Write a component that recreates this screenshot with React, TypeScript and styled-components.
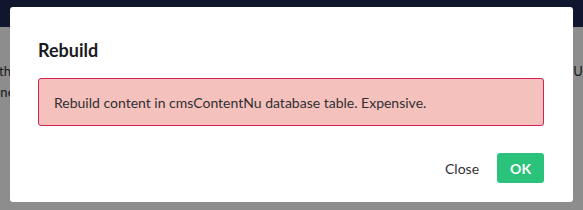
import styled, { createGlobalStyle } from 'styled-components';

const GlobalStyle = createGlobalStyle`
  html, body {
    margin: 0;
    padding: 0;
    width: 583px;
    height: 210px;
    overflow: hidden;
    font-family: Lato, "Open Sans", sans-serif;
  }
`;

const Page = styled.div`
  position: relative;
  width: 583px;
  height: 210px;
  display: flex;
  flex-direction: column;
  background: #f3f3f5;
  overflow: hidden;
`;

const TopBar = styled.div`
  height: 27px;
  background: #1b264f;
  flex-shrink: 0;
`;

const Behind = styled.div`
  flex: 1;
  display: flex;
  justify-content: space-between;
  padding-top: 34px;
  font-size: 13px;
  color: #303033;
  line-height: 21px;
`;

const BehindLine = styled.p<{ $shift: number }>`
  margin: 0 0 0 ${(p) => p.$shift}px;
  white-space: nowrap;
`;

const Overlay = styled.div`
  position: absolute;
  inset: 0;
  background: rgba(0, 0, 0, 0.42);
`;

const Modal = styled.div`
  position: absolute;
  left: 10px;
  top: 7px;
  width: 563px;
  height: 195px;
  background: #fff;
  border-radius: 3px;
  box-sizing: border-box;
  padding: 31px 29px 0 28px;
  display: flex;
  flex-direction: column;
`;

const Title = styled.h1`
  margin: 0;
  font-size: 18px;
  font-weight: 700;
  line-height: 24px;
  color: #1b1b1d;
`;

const Alert = styled.div`
  margin-top: 16px;
  height: 48px;
  box-sizing: border-box;
  padding: 0 15px;
  display: flex;
  align-items: center;
  background: #f5c1bc;
  border: 1px solid #d42054;
  border-radius: 3px;
  font-size: 14px;
  color: #303033;
`;

const Footer = styled.div`
  margin-top: 27px;
  display: flex;
  justify-content: flex-end;
  align-items: center;
  gap: 18px;
`;

const Button = styled.button<{ $primary?: boolean }>`
  font-family: inherit;
  font-size: 14px;
  border: none;
  border-radius: 3px;
  height: 30px;
  cursor: pointer;
  padding: ${(p) => (p.$primary ? '0 13px' : '0')};
  background: ${(p) => (p.$primary ? '#2bc37c' : 'transparent')};
  color: ${(p) => (p.$primary ? '#fff' : '#303033')};
  font-weight: ${(p) => (p.$primary ? 700 : 400)};
`;

export default function App() {
  return (
    <>
      <GlobalStyle />
      <Page>
        <TopBar />
        <Behind>
          <div>
            <BehindLine $shift={-1}>this</BehindLine>
            <BehindLine $shift={-7}>one</BehindLine>
          </div>
          <div>
            <BehindLine $shift={0} style={{ marginRight: -12 }}>. Use</BehindLine>
          </div>
        </Behind>
        <Overlay />
        <Modal>
          <Title>Rebuild</Title>
          <Alert>Rebuild content in cmsContentNu database table. Expensive.</Alert>
          <Footer>
            <Button>Close</Button>
            <Button $primary>OK</Button>
          </Footer>
        </Modal>
      </Page>
    </>
  );
}
